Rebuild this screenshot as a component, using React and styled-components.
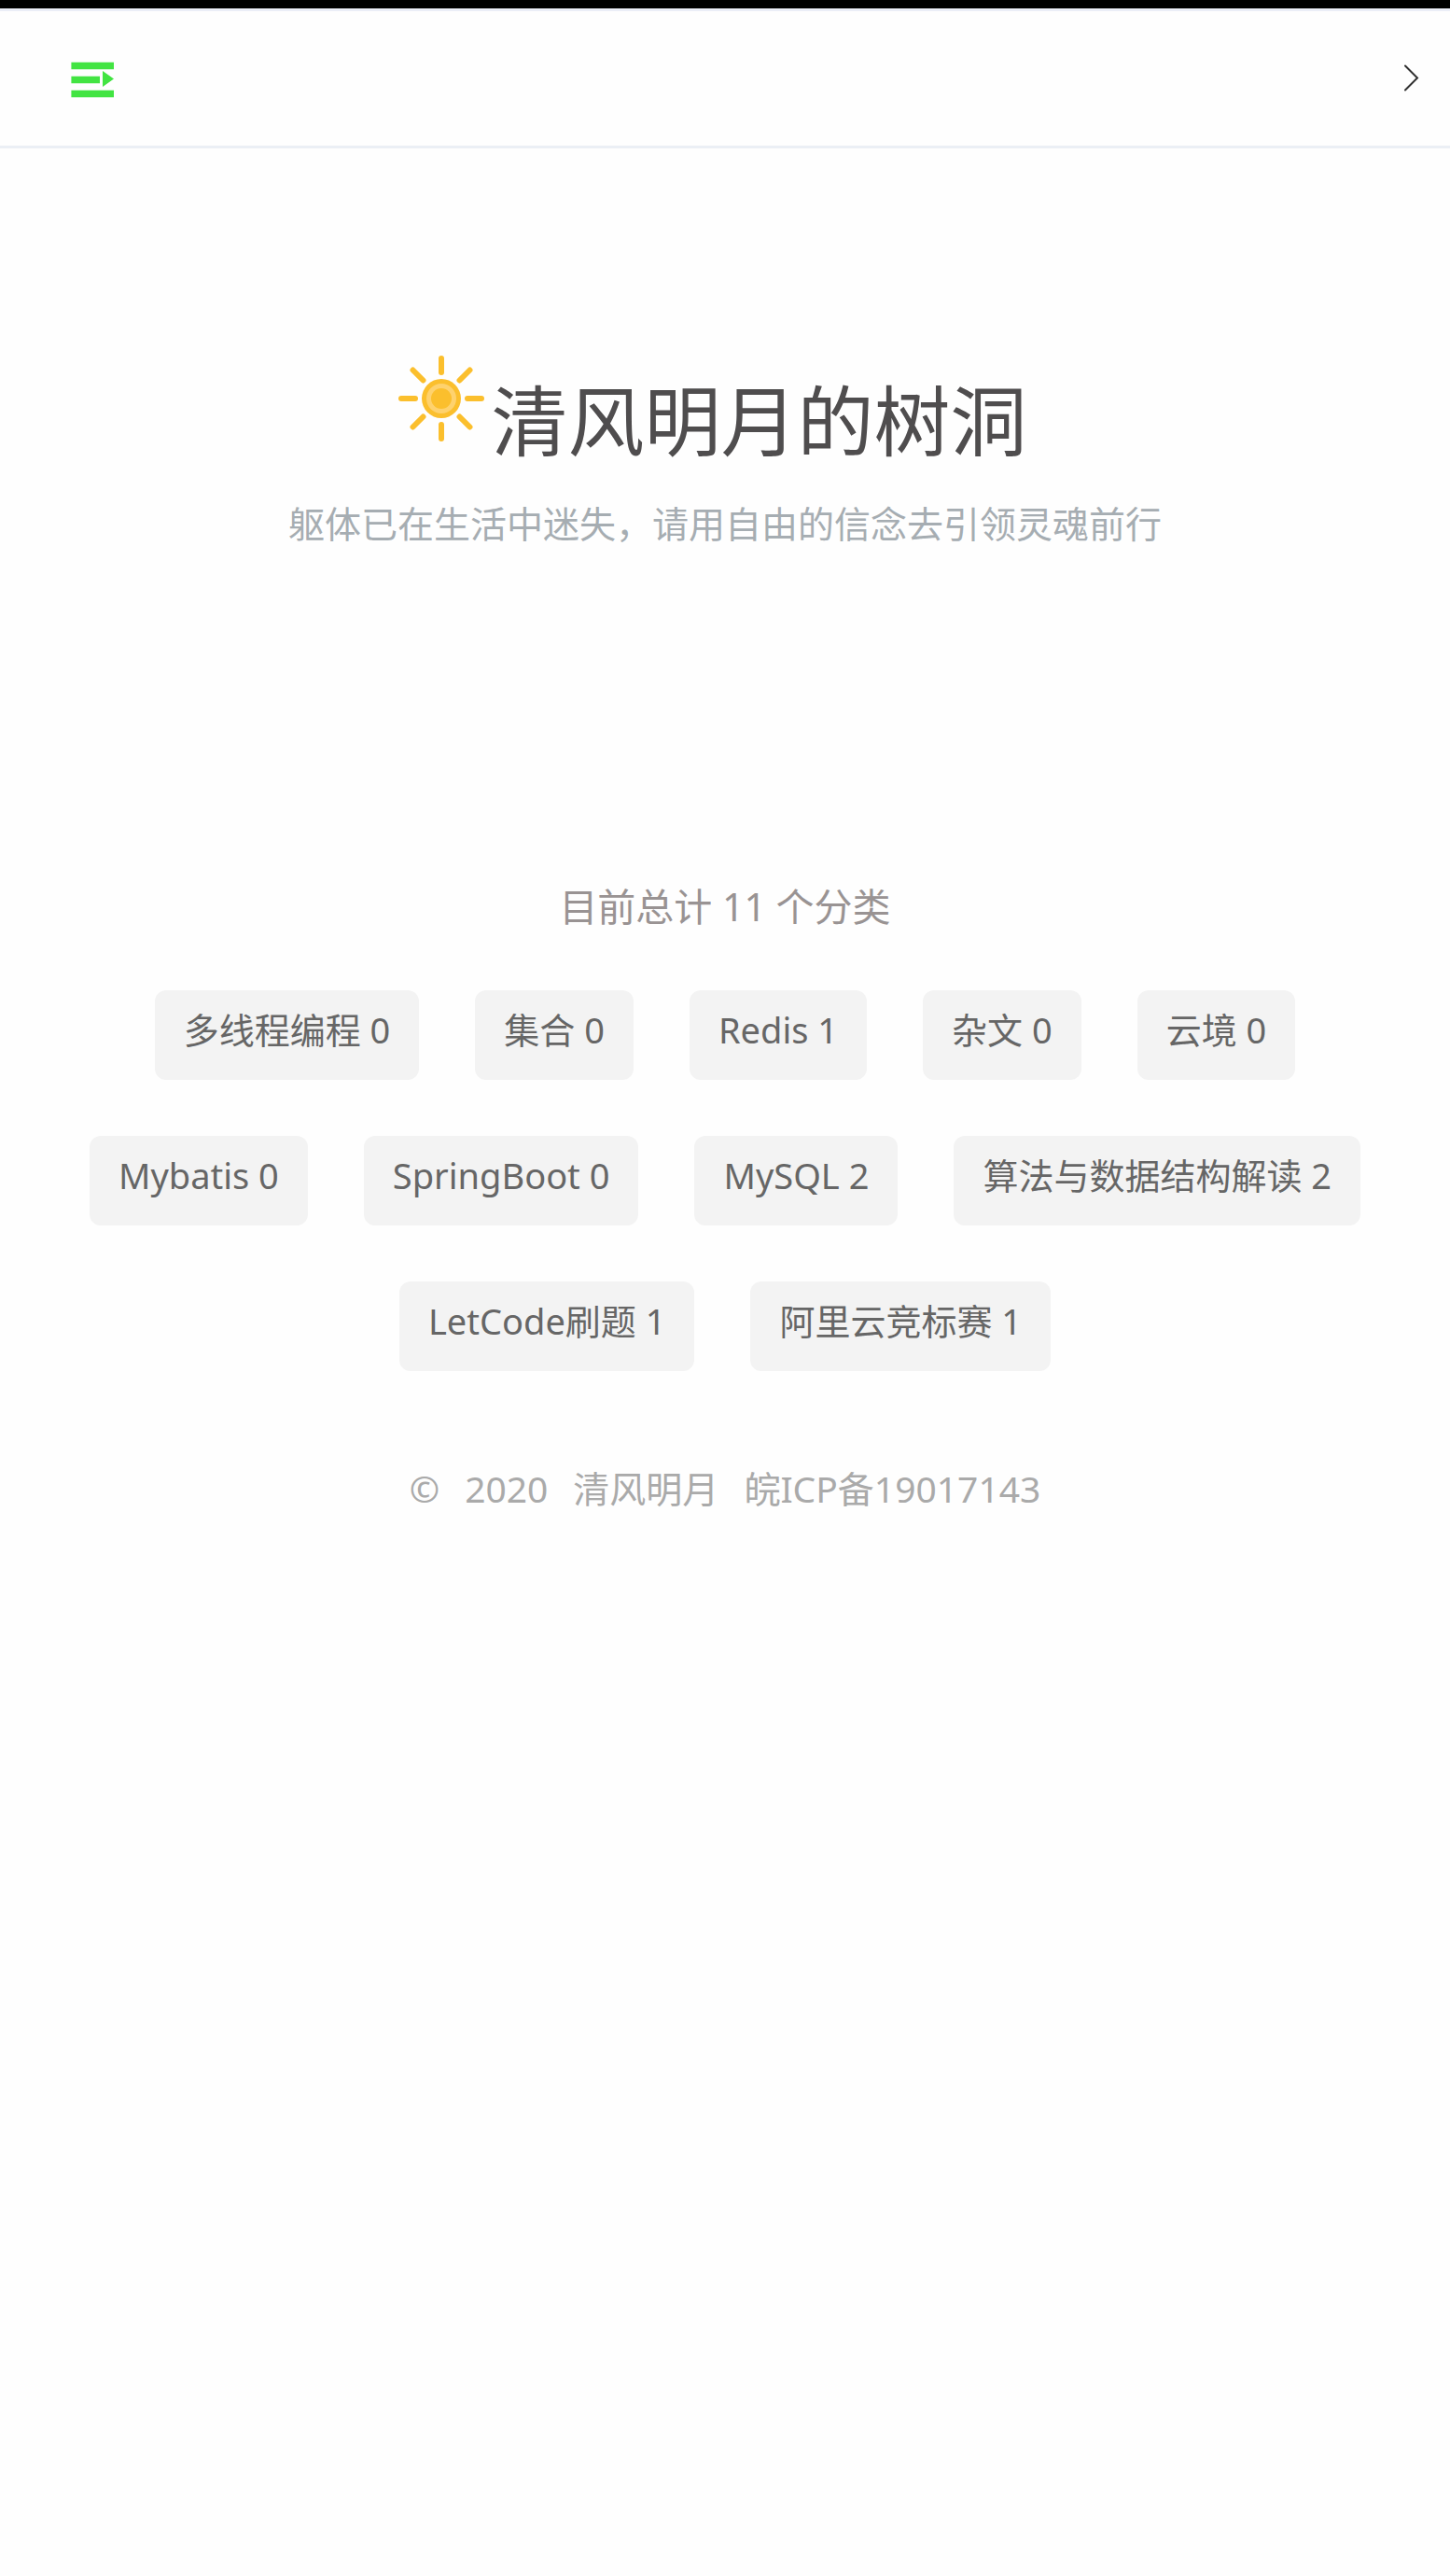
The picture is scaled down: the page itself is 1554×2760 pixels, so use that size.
import React from "react";
import styled, { createGlobalStyle } from "styled-components";

const GlobalStyle = createGlobalStyle`
  * { box-sizing: border-box; }
  body {
    margin: 0;
    background: #fefefe;
    font-family: "Noto Sans", "Noto Sans CJK SC", sans-serif;
  }
`;

const StatusBar = styled.div`
  height: 9px;
  background: #000;
`;

const Header = styled.header`
  display: flex;
  align-items: center;
  justify-content: space-between;
  height: 150px;
  padding: 0 32px 0 72px;
  border-top: 3px solid #ebeef7;
  border-bottom: 3px solid #ebeff5;
`;

const IconButton = styled.button`
  display: flex;
  padding: 0;
  border: 0;
  background: none;
  cursor: pointer;
`;

const Main = styled.main`
  display: flex;
  flex-direction: column;
  align-items: center;
`;

const Hero = styled.section`
  display: flex;
  flex-direction: column;
  align-items: center;
  padding-top: 220px;
`;

const Title = styled.h1`
  display: flex;
  align-items: flex-start;
  gap: 5px;
  margin: 0;
  padding-right: 28px;
  color: #4f4d4e;
  font-size: 82px;
  font-weight: 400;
  line-height: 142px;
`;

const Subtitle = styled.p`
  margin: 10px 0 0;
  color: #a6adb2;
  font-size: 39px;
  line-height: 60px;
`;

const Count = styled.h2`
  margin: 350px 0 0;
  color: #999393;
  font-size: 41px;
  font-weight: 400;
  line-height: 60px;
`;

const TagList = styled.ul`
  display: flex;
  flex-wrap: wrap;
  justify-content: center;
  gap: 60px;
  margin: 60px 0 0;
  padding: 0 60px;
  list-style: none;
`;

const Tag = styled.a`
  display: block;
  height: 96px;
  padding: 0 31px;
  border-radius: 12px;
  background: #f3f3f3;
  color: #666;
  font-size: 38px;
  line-height: 84px;
  text-decoration: none;
  white-space: nowrap;
`;

const Footer = styled.footer`
  display: flex;
  justify-content: center;
  gap: 27px;
  margin-top: 96px;
  color: #aaa;
  font-size: 39px;
  line-height: 60px;
`;

const FooterLink = styled.a`
  color: inherit;
  text-decoration: none;
`;

const tags = [
  ["多线程编程", 0],
  ["集合", 0],
  ["Redis", 1],
  ["杂文", 0],
  ["云境", 0],
  ["Mybatis", 0],
  ["SpringBoot", 0],
  ["MySQL", 2],
  ["算法与数据结构解读", 2],
  ["LetCode刷题", 1],
  ["阿里云竞标赛", 1],
];

const MenuIcon = () => (
  <svg width="54" height="48" viewBox="0 0 54 48" fill="#42e442" aria-hidden="true">
    <path d="M4.400 6.700H50v7.600H4.400zM4.400 21.700H35v7.600H4.400zM4.400 36.700H50v7.600H4.400zM38 16L50 24.500L38 33z" />
  </svg>
);

const ChevronIcon = () => (
  <svg width="20" height="32" viewBox="0 0 20 32" fill="none" aria-hidden="true">
    <path d="M4 2.500L17 15.500L4 28.500" stroke="#303030" strokeWidth="2" strokeLinecap="round" />
  </svg>
);

const SunIcon = () => (
  <svg width="96" height="96" viewBox="0 0 96 96" aria-hidden="true">
    <g stroke="#fbbf2d" strokeWidth="6" strokeLinecap="round">
      <path d="M48 5v15M48 76v15M5 48h15M76 48h15M17.500 17.500l11 11M67.500 67.500l11 11M78.500 17.500l-11 11M28.500 67.500l-11 11" />
    </g>
    <circle cx="48" cy="48" r="21" fill="#fbbf2d" />
    <circle cx="48" cy="48" r="16" fill="#fed26e" />
    <circle cx="48" cy="48" r="11" fill="#fbbf2d" />
  </svg>
);

export default function App() {
  return (
    <>
      <GlobalStyle />
      <StatusBar />
      <Header>
        <IconButton type="button" aria-label="菜单">
          <MenuIcon />
        </IconButton>
        <IconButton type="button" aria-label="展开">
          <ChevronIcon />
        </IconButton>
      </Header>
      <Main>
        <Hero>
          <Title>
            <SunIcon />
            <span>清风明月的树洞</span>
          </Title>
          <Subtitle>躯体已在生活中迷失，请用自由的信念去引领灵魂前行</Subtitle>
        </Hero>
        <Count>目前总计 11 个分类</Count>
        <TagList>
          {tags.map(([name, total]) => (
            <li key={name}>
              <Tag href="#">{`${name} ${total}`}</Tag>
            </li>
          ))}
        </TagList>
      </Main>
      <Footer>
        <span>©</span>
        <span>2020</span>
        <span>清风明月</span>
        <FooterLink href="#">皖ICP备19017143</FooterLink>
      </Footer>
    </>
  );
}
